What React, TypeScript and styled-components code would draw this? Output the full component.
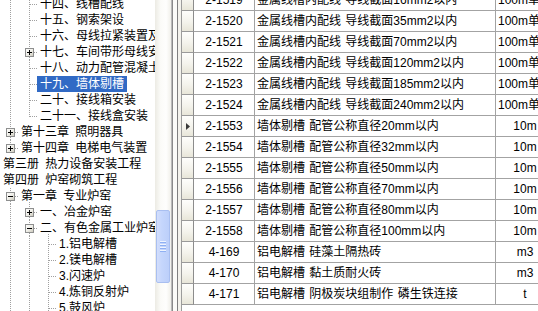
import React from 'react';
import styled, { createGlobalStyle } from 'styled-components';

const Global = createGlobalStyle`
  html, body { margin: 0; padding: 0; width: 538px; height: 311px; overflow: hidden; background: #fff; }
  body { font-family: "Liberation Sans", "Noto Sans CJK SC", sans-serif; font-size: 12px; color: #000; }
  #root { width: 538px; height: 311px; }
`;

const Window = styled.div`
  display: flex;
  width: 538px;
  height: 311px;
  overflow: hidden;
`;

/* ---------- tree ---------- */
const TreePanel = styled.div`
  display: flex;
  flex: none;
  width: 172px;
  box-sizing: border-box;
  border-right: 1px solid #b9b9b9;
  background: #fff;
`;

const TreeList = styled.ul`
  list-style: none;
  margin: -4px 0 0;
  padding: 0;
  width: 155px;
  flex: none;
  overflow: hidden;
`;

const TreeRow = styled.li`
  display: flex;
  align-items: center;
  height: 16px;
  white-space: pre;
`;

const Label = styled.span<{ $selected?: boolean; $expanded?: boolean }>`
  flex: none;
  height: 16px;
  line-height: 16px;
  padding: 0 3px;
  word-spacing: 3px;
  background: ${p => (p.$selected ? '#316ac5' : 'transparent')};
  background-image: ${p => (p.$expanded ? 'linear-gradient(#a0a0a0, #a0a0a0)' : 'none')};
  background-size: 1px 1px;
  background-position: 11px 14px;
  background-repeat: no-repeat;
  color: ${p => (p.$selected ? '#fff' : '#000')};
`;

const GuideSvg = styled.svg`
  flex: none;
  display: block;
`;

const ScrollTrack = styled.div`
  flex: none;
  width: 16px;
  display: flex;
  flex-direction: column;
  align-items: center;
  background: linear-gradient(to right, #ecebe4 0%, #fbfbf8 35%, #fefefd 70%, #f1f0ea 100%);
`;

const Thumb = styled.div`
  margin-top: 210px;
  width: 14px;
  height: 73px;
  box-sizing: border-box;
  border: 1px solid #a9bff0;
  border-radius: 2px;
  background: linear-gradient(to right, #d3defc 0%, #c5d6fc 40%, #bccffa 100%);
  display: flex;
  flex-direction: column;
  align-items: center;
  justify-content: center;
  gap: 1px;
`;

const Grip = styled.span`
  width: 6px;
  height: 1px;
  background: #eef4fe;
  box-shadow: 0 1px 0 #8fb0f3;
  margin-bottom: 1px;
`;

const Splitter = styled.div`
  flex: none;
  width: 5px;
  box-sizing: border-box;
  border-left: 1px solid #8a8a8a;
  background: #fbfbf8;
`;

/* ---------- grid ---------- */
const GridPanel = styled.div`
  flex: 1;
  display: flex;
  border-left: 1px solid #7f7f7f;
  padding-left: 3px;
  background: #f3f2ec;
  min-width: 0;
`;

const Table = styled.div`
  flex: 1;
  display: flex;
  flex-direction: column;
  border-left: 1px solid #9c9c9c;
  background: #fff;
  overflow: hidden;
`;

const Rows = styled.div`
  margin-top: -10px;
  display: flex;
  flex-direction: column;
`;

const Row = styled.div`
  display: flex;
  height: 21px;
  flex: none;
`;

const RowHeader = styled.div`
  flex: none;
  width: 12px;
  box-sizing: border-box;
  border-right: 1px solid #8c8c8c;
  border-bottom: 1px solid #9a9a9a;
  background: linear-gradient(to bottom, #fefefc 0%, #f4f3ec 55%, #e8e6d9 100%);
  display: flex;
  align-items: center;
  justify-content: center;
`;

const Cell = styled.div<{ $w: number; $align?: 'left' | 'center' }>`
  flex: none;
  width: ${p => p.$w}px;
  box-sizing: border-box;
  border-right: 1px solid #a3a3a3;
  border-bottom: 1px solid #a3a3a3;
  padding: 0 2px;
  line-height: 20px;
  white-space: pre;
  overflow: hidden;
  text-align: ${p => p.$align ?? 'left'};
  word-spacing: 1px;
`;

/* ---------- data ---------- */
type TreeItem = {
  text: string;
  level: number;
  box?: 'plus' | 'minus';
  last?: boolean;
  anc?: boolean[];
  selected?: boolean;
};

const tree: TreeItem[] = [
  { text: '十四、线槽配线', level: 2, anc: [true] },
  { text: '十五、钢索架设', level: 2, anc: [true] },
  { text: '十六、母线拉紧装置及钢索拉紧装置制作安装', level: 2, anc: [true] },
  { text: '十七、车间带形母线安装', level: 2, anc: [true], box: 'plus' },
  { text: '十八、动力配管混凝土地面刨沟', level: 2, anc: [true] },
  { text: '十九、墙体剔槽', level: 2, anc: [true], selected: true },
  { text: '二十、接线箱安装', level: 2, anc: [true] },
  { text: '二十一、接线盒安装', level: 2, anc: [true], last: true },
  { text: '第十三章 照明器具', level: 1, box: 'plus' },
  { text: '第十四章 电梯电气装置', level: 1, box: 'plus', last: true },
  { text: '第三册 热力设备安装工程', level: 0 },
  { text: '第四册 炉窑砌筑工程', level: 0 },
  { text: '第一章 专业炉窑', level: 1, box: 'minus' },
  { text: '一、冶金炉窑', level: 2, anc: [true], box: 'plus' },
  { text: '二、有色金属工业炉窑', level: 2, anc: [true], box: 'minus' },
  { text: '1.铝电解槽', level: 3, anc: [true, true] },
  { text: '2.镁电解槽', level: 3, anc: [true, true] },
  { text: '3.闪速炉', level: 3, anc: [true, true] },
  { text: '4.炼铜反射炉', level: 3, anc: [true, true] },
  { text: '5.鼓风炉', level: 3, anc: [true, true] },
];

type GridRow = { code: string; name: string; unit: string; current?: boolean };

const grid: GridRow[] = [
  { code: '2-1519', name: '金属线槽内配线 导线截面16mm2以内', unit: '100m单线' },
  { code: '2-1520', name: '金属线槽内配线 导线截面35mm2以内', unit: '100m单线' },
  { code: '2-1521', name: '金属线槽内配线 导线截面70mm2以内', unit: '100m单线' },
  { code: '2-1522', name: '金属线槽内配线 导线截面120mm2以内', unit: '100m单线' },
  { code: '2-1523', name: '金属线槽内配线 导线截面185mm2以内', unit: '100m单线' },
  { code: '2-1524', name: '金属线槽内配线 导线截面240mm2以内', unit: '100m单线' },
  { code: '2-1553', name: '墙体剔槽 配管公称直径20mm以内', unit: '10m', current: true },
  { code: '2-1554', name: '墙体剔槽 配管公称直径32mm以内', unit: '10m' },
  { code: '2-1555', name: '墙体剔槽 配管公称直径50mm以内', unit: '10m' },
  { code: '2-1556', name: '墙体剔槽 配管公称直径70mm以内', unit: '10m' },
  { code: '2-1557', name: '墙体剔槽 配管公称直径80mm以内', unit: '10m' },
  { code: '2-1558', name: '墙体剔槽 配管公称直径100mm以内', unit: '10m' },
  { code: '4-169', name: '铝电解槽 硅藻土隔热砖', unit: 'm3' },
  { code: '4-170', name: '铝电解槽 黏土质耐火砖', unit: 'm3' },
  { code: '4-171', name: '铝电解槽 阴极炭块组制作 磷生铁连接', unit: 't' },
];

const LINE = '#a0a0a0';

function Guides({ item }: { item: TreeItem }) {
  const { level, box, last, anc = [] } = item;
  if (level === 0) return null;
  const w = level * 19 - 1;
  const c = level * 19 - 9;
  const p = (x: number) => x + 0.5;
  const dash = { stroke: LINE, strokeDasharray: '1 1', strokeWidth: 1 };
  const parts: React.ReactNode[] = [];
  anc.forEach((cont, i) => {
    if (!cont) return;
    const x = (i + 1) * 19 - 9;
    parts.push(<line key={'a' + i} x1={p(x)} y1={0} x2={p(x)} y2={16} {...dash} />);
  });
  if (box) {
    parts.push(<line key="up" x1={p(c)} y1={0} x2={p(c)} y2={4} {...dash} />);
    if (!last) parts.push(<line key="dn" x1={p(c)} y1={13} x2={p(c)} y2={16} {...dash} />);
    parts.push(<line key="h" x1={c + 5} y1={8.5} x2={w} y2={8.5} {...dash} />);
    parts.push(
      <rect key="box" x={c - 3.5} y={4.5} width={8} height={8} fill="url(#boxfill)" stroke="#8e8f8f" />
    );
    parts.push(<line key="mh" x1={c - 2} y1={8.5} x2={c + 3} y2={8.5} stroke="#000" />);
    if (box === 'plus') parts.push(<line key="mv" x1={p(c)} y1={6} x2={p(c)} y2={11} stroke="#000" />);
  } else {
    parts.push(<line key="v" x1={p(c)} y1={0} x2={p(c)} y2={last ? 9 : 16} {...dash} />);
    parts.push(<line key="h" x1={c + 1} y1={8.5} x2={w} y2={8.5} {...dash} />);
  }
  return (
    <GuideSvg width={w} height={16} viewBox={`0 0 ${w} 16`}>
      <defs>
        <linearGradient id="boxfill" x1="0" y1="0" x2="1" y2="1">
          <stop offset="0" stopColor="#ffffff" />
          <stop offset="0.5" stopColor="#f0efe9" />
          <stop offset="1" stopColor="#c9c6b8" />
        </linearGradient>
      </defs>
      {parts}
    </GuideSvg>
  );
}

function RowArrow() {
  return (
    <svg width={4} height={7} viewBox="0 0 4 7">
      <polygon points="0,0 4,3.5 0,7" fill="#3a3a3a" />
    </svg>
  );
}

export default function App() {
  return (
    <>
      <Global />
      <Window>
        <TreePanel>
          <TreeList>
            {tree.map((item, i) => (
              <TreeRow key={i}>
                <Guides item={item} />
                <Label $selected={item.selected} $expanded={item.box === 'minus'}>
                  {item.text}
                </Label>
              </TreeRow>
            ))}
          </TreeList>
          <ScrollTrack>
            <Thumb>
              <Grip />
              <Grip />
              <Grip />
              <Grip />
            </Thumb>
          </ScrollTrack>
        </TreePanel>
        <Splitter />
        <GridPanel>
          <Table>
            <Rows>
              {grid.map(r => (
                <Row key={r.code}>
                  <RowHeader>{r.current ? <RowArrow /> : null}</RowHeader>
                  <Cell $w={61} $align="center">{r.code}</Cell>
                  <Cell $w={241}>{r.name}</Cell>
                  <Cell $w={59} $align="center">{r.unit}</Cell>
                </Row>
              ))}
            </Rows>
          </Table>
        </GridPanel>
      </Window>
    </>
  );
}
